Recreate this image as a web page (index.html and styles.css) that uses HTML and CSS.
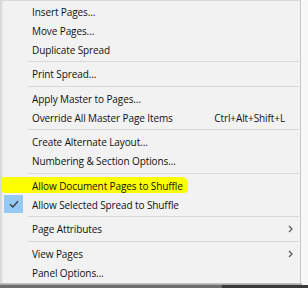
FILE: index.html
```html
<!DOCTYPE html>
<html>
<head>
<meta charset="utf-8">
<link rel="stylesheet" href="styles.css">
</head>
<body>
<div class="screen">
  <div class="menu">
    <div class="item"><span class="label">Insert Pages...</span></div>
    <div class="item"><span class="label">Move Pages...</span></div>
    <div class="item"><span class="label">Duplicate Spread</span></div>
    <div class="sep"></div>
    <div class="item"><span class="label">Print Spread...</span></div>
    <div class="sep"></div>
    <div class="item"><span class="label">Apply Master to Pages...</span></div>
    <div class="item"><span class="label">Override All Master Page Items</span><span class="shortcut">Ctrl+Alt+Shift+L</span></div>
    <div class="sep"></div>
    <div class="item"><span class="label">Create Alternate Layout...</span></div>
    <div class="item"><span class="label">Numbering &amp; Section Options...</span></div>
    <div class="sep"></div>
    <div class="item marked"><span class="highlight"></span><span class="label">Allow Document Pages to Shuffle</span></div>
    <div class="item"><span class="check"><svg width="10" height="8" viewBox="0 0 10 8"><path d="M1 4.2 L3.8 7 L9 1.2" fill="none" stroke="#3c3c3c" stroke-width="1.3"/></svg></span><span class="label">Allow Selected Spread to Shuffle</span></div>
    <div class="sep"></div>
    <div class="item"><span class="label">Page Attributes</span><span class="arrow"><svg width="5" height="8" viewBox="0 0 5 8"><path d="M1 1 L4 4 L1 7" fill="none" stroke="#555" stroke-width="1.2"/></svg></span></div>
    <div class="sep"></div>
    <div class="item"><span class="label">View Pages</span><span class="arrow"><svg width="5" height="8" viewBox="0 0 5 8"><path d="M1 1 L4 4 L1 7" fill="none" stroke="#555" stroke-width="1.2"/></svg></span></div>
    <div class="item"><span class="label">Panel Options...</span></div>
  </div>
  <div class="shadow"></div>
  <div class="bottombar"><span class="seg light"></span><span class="seg dark"></span></div>
</div>
</body>
</html>
```

FILE: styles.css
```css
html, body {
  margin: 0;
  padding: 0;
  background: #f7f7f7;
}
.screen {
  width: 308px;
  height: 288px;
  overflow: hidden;
  display: flex;
  flex-direction: column;
}
.menu {
  width: 301px;
  height: 283px;
  box-sizing: border-box;
  background: #f2f2f2;
  border-top: 1px solid #d9d9d9;
  border-left: 2px solid #dadada;
  border-right: 1px solid #c6c6c6;
  padding-top: 1px;
  font-family: "Open Sans", "Noto Sans", sans-serif;
  font-size: 10px;
  letter-spacing: -0.1px;
  color: #111;
  display: flex;
  flex-direction: column;
  box-shadow: inset 1px 0 0 #ebebeb;
}
.item {
  position: relative;
  height: 19px;
  display: flex;
  align-items: center;
  padding-left: 30px;
  padding-right: 13px;
  white-space: nowrap;
}
.label {
  position: relative;
  z-index: 1;
  flex: 1;
}
.shortcut {
  position: relative;
  z-index: 1;
  padding-right: 2px;
}
.arrow {
  display: flex;
  align-items: center;
  margin-right: -6px;
}
.sep {
  height: 1px;
  margin: 2px 1px 2.5px 26px;
  background: #d7d7d7;
}
.highlight {
  position: absolute;
  left: 0;
  top: 1px;
  width: 186px;
  height: 16px;
  background: #fbff00;
  border-radius: 2px 6px 4px 3px;
  filter: blur(0.4px);
}
.check {
  position: absolute;
  left: 2px;
  top: 0;
  width: 19px;
  height: 18px;
  background: #95c8f4;
  display: flex;
  align-items: center;
  justify-content: center;
}
.shadow {
  height: 2px;
  width: 302px;
  background: linear-gradient(#cfcfcf, #9a9a9a);
}
.bottombar {
  flex: 1;
  display: flex;
}
.seg.light {
  width: 222px;
  background: #6e6e6e;
}
.seg.dark {
  flex: 1;
  background: #3a3a3a;
}
```
